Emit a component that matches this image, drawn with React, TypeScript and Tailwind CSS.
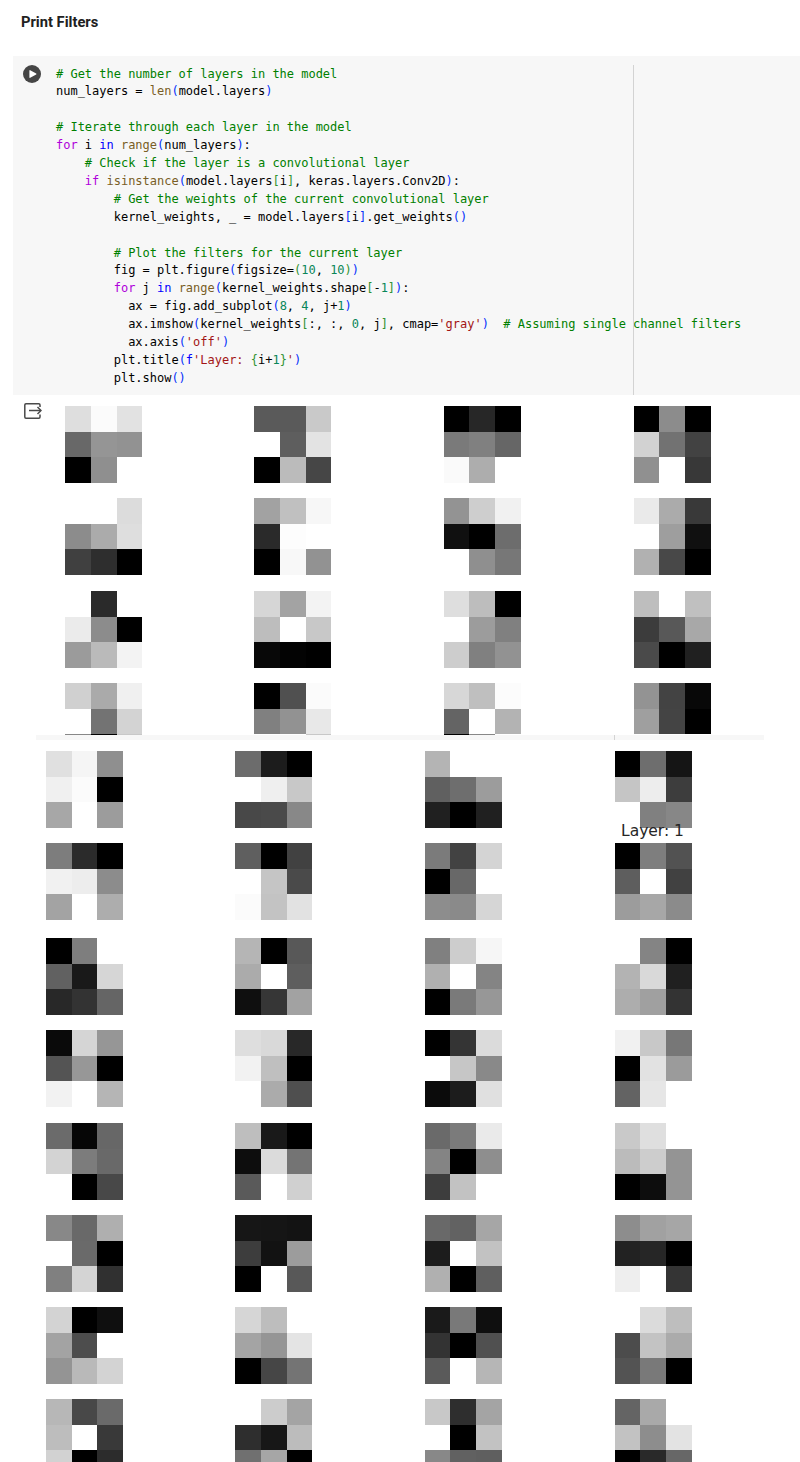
import React from 'react';

const upperFilters = [
  'de fb e2 68 95 92 00 8f ff', '5a 5a c9 ff 5e e3 00 bb 46', '00 27 00 7a 80 66 fa ad ff', '00 8c 00 d2 72 42 90 ff 38',
  'ff ff dc 8c ab de 40 2e 00', 'a2 c0 f7 2a fd ff 00 f8 92', '93 ce f1 10 00 6d ff 8f 77', 'ea ab 39 ff 9e 10 b1 48 00',
  'ff 2a ff eb 8c 00 9b ba f3', 'd6 a3 f3 bd ff c8 08 03 00', 'de bd 00 ff 9c 80 cd 80 92', 'be ff c0 3c 58 a8 4a 00 20',
  'd0 aa f0 ff 73 d3 88 00 c8', '00 50 fb 80 92 e8 ff ff c8', 'd7 bf fc 64 ff b3 00 88 ff', '93 43 08 9f 44 00 ff ff ff',
];

const lowerFilters = [
  'e0 f5 8f f0 fb 00 a7 ff 9c', '6c 1c 00 ff ef c8 48 4a 88', 'b4 ff ff 60 6e 9c 20 00 20', '00 6e 15 c5 ed 3d ff 80 87',
  '7d 2b 00 f1 ed 8c a3 ff ad', '5f 00 41 ff c5 4a fb c3 e2', '7b 42 d4 00 68 ff 8d 8a d6', '00 7e 52 5e ff 41 9c a7 8b',
  '00 7e ff 61 19 d6 28 33 65', 'b5 00 58 ab ff 5e 0f 36 a2', '80 cd f6 b0 ff 84 00 7a 97', 'ff 84 00 b3 d9 20 ad a0 33',
  '0a d5 96 54 97 00 f2 ff b5', 'de d9 28 f2 bf 00 ff ab 4f', '00 34 db ff c6 89 0b 1c e0', 'f1 c8 77 00 e2 9b 63 e6 ff',
  '6b 06 67 d3 7c 69 ff 00 48', 'be 19 00 0d db 74 5a ff d0', '6a 7b ea 84 00 8e 3d c2 ff', 'c9 df ff bb cd 94 00 0d 94',
  '88 69 af ff 6a 00 80 d4 30', '16 15 13 3d 12 9c 00 ff 58', '69 62 a6 1c ff c2 b0 00 5f', '8d a1 a6 22 26 00 ee ff 34',
  'd3 00 0f a3 4d ff 94 b9 d3', 'd6 bd ff a4 95 e4 00 46 74', '1a 79 0f 33 00 50 5a ff b6', 'ff db be 4c c3 ab 53 79 00',
  'b7 48 6a bd ff 39 d2 00 2c', 'ff cc a4 2e 17 bc 70 a6 00', 'c8 2e a4 ff 00 c2 88 61 5f', '64 a9 ff c2 8d e3 00 29 67',
];

function Filter({ values }: { values: string }) {
  return (
    <div className="grid grid-cols-3 grid-rows-3 w-[77px] h-[77px]">
      {values.split(' ').map((v, i) => (
        <div key={i} style={{ backgroundColor: `#${v}${v}${v}` }} />
      ))}
    </div>
  );
}

const C = ({ children }: { children: string }) => <span className="text-[#008000]">{children}</span>;
const K = ({ children }: { children: string }) => <span className="text-[#af00db]">{children}</span>;
const B = ({ children }: { children: string }) => <span className="text-[#0000ff]">{children}</span>;
const F = ({ children }: { children: string }) => <span className="text-[#795e26]">{children}</span>;
const N = ({ children }: { children: string }) => <span className="text-[#098658]">{children}</span>;
const S = ({ children }: { children: string }) => <span className="text-[#a31515]">{children}</span>;
const P1 = ({ children }: { children: string }) => <span className="text-[#0431fa]">{children}</span>;
const P2 = ({ children }: { children: string }) => <span className="text-[#319331]">{children}</span>;

function Code() {
  return (
    <pre className="font-['DejaVu_Sans_Mono',monospace] text-[12px] leading-[17.9px] tracking-[-0.012px] text-black">
      <C># Get the number of layers in the model</C>{'\n'}
      num_layers = <F>len</F><P1>(</P1>model.layers<P1>)</P1>{'\n'}
      {'\n'}
      <C># Iterate through each layer in the model</C>{'\n'}
      <K>for</K> i <B>in</B> <F>range</F><P1>(</P1>num_layers<P1>)</P1>:{'\n'}
      {'    '}<C># Check if the layer is a convolutional layer</C>{'\n'}
      {'    '}<K>if</K> <F>isinstance</F><P1>(</P1>model.layers<P2>[</P2>i<P2>]</P2>, keras.layers.Conv2D<P1>)</P1>:{'\n'}
      {'        '}<C># Get the weights of the current convolutional layer</C>{'\n'}
      {'        '}kernel_weights, _ = model.layers<P1>[</P1>i<P1>]</P1>.get_weights<P1>()</P1>{'\n'}
      {'\n'}
      {'        '}<C># Plot the filters for the current layer</C>{'\n'}
      {'        '}fig = plt.figure<P1>(</P1>figsize=<P2>(</P2><N>10</N>, <N>10</N><P2>)</P2><P1>)</P1>{'\n'}
      {'        '}<K>for</K> j <B>in</B> <F>range</F><P1>(</P1>kernel_weights.shape<P2>[</P2>-<N>1</N><P2>]</P2><P1>)</P1>:{'\n'}
      {'          '}ax = fig.add_subplot<P1>(</P1><N>8</N>, <N>4</N>, j+<N>1</N><P1>)</P1>{'\n'}
      {'          '}ax.imshow<P1>(</P1>kernel_weights<P2>[</P2>:, :, <N>0</N>, j<P2>]</P2>, cmap=<S>'gray'</S><P1>)</P1>{'  '}<C># Assuming single channel filters</C>{'\n'}
      {'          '}ax.axis<P1>(</P1><S>'off'</S><P1>)</P1>{'\n'}
      {'        '}plt.title<P1>(</P1><B>f</B><S>'Layer: </S><P2>{'{'}</P2>i+<N>1</N><P2>{'}'}</P2><S>'</S><P1>)</P1>{'\n'}
      {'        '}plt.show<P1>()</P1>
    </pre>
  );
}

export default function App() {
  return (
    <div className="w-[800px] h-[1462px] overflow-hidden bg-white">
      <h1 className="h-[56px] pt-[14px] pl-[21px] font-['Roboto',sans-serif] text-[14.7px] leading-[16px] font-bold text-[#212121]">
        Print Filters
      </h1>

      {/* code cell */}
      <div className="relative flex ml-[13px] h-[339px] pt-[9px] pl-[10px] bg-[#f7f7f7]">
        <svg width="18" height="18" viewBox="0 0 18 18" className="shrink-0">
          <circle cx="9" cy="9" r="9" fill="#454545" />
          <path d="M6.4 5.6v6.8a.5.5 0 0 0 .8.4l6-3.4a.5.5 0 0 0 0-.8l-6-3.4a.5.5 0 0 0-.8.4z" fill="#fff" />
        </svg>
        <div className="pl-[15px] pt-[0.5px]">
          <Code />
        </div>
        <div className="absolute left-[620px] top-[9px] bottom-0 w-px bg-[#d3d3d3]" />
      </div>

      {/* first output frame, cut off at the bottom */}
      <div className="relative h-[340px] overflow-hidden pt-[11px] pl-[65.33px]">
        <svg width="18" height="16" viewBox="0 0 18 16" fill="none" stroke="#4a4a4a" strokeWidth="1.5" className="absolute left-[24px] top-[8px]">
          <path d="M16 4V2a1.2 1.2 0 0 0-1.2-1.2H2A1.2 1.2 0 0 0 .8 2v12A1.2 1.2 0 0 0 2 15.2h12.8A1.2 1.2 0 0 0 16 14v-2.5" />
          <path d="M5 7.5h12" />
          <path d="M13.5 4l3.5 3.5-3.5 3.5" />
        </svg>
        <div className="grid grid-cols-[189px_189.33px_190px_77px] grid-rows-[92px_93px_92px_77px]">
          {upperFilters.map((v, i) => (
            <Filter key={i} values={v} />
          ))}
        </div>
      </div>

      {/* scroll strip between the frames */}
      <div className="relative ml-[36px] w-[728px] h-[5px] bg-[#f7f7f7]">
        <div className="absolute left-[578px] top-0 w-px h-full bg-[#d3d3d3]" />
      </div>

      {/* second output frame */}
      <div className="relative pt-[11px] pl-[46px]">
        <div className="grid grid-cols-[189.33px_189.33px_190px_77px] grid-rows-[92px_95px_92px_93px_92px_92px_92px_77px]">
          {lowerFilters.map((v, i) => (
            <Filter key={i} values={v} />
          ))}
        </div>
        <span className="absolute left-[621px] top-[81px] font-['DejaVu_Sans',sans-serif] text-[15.5px] leading-[20px] text-[#262626]">
          Layer: 1
        </span>
      </div>
    </div>
  );
}
